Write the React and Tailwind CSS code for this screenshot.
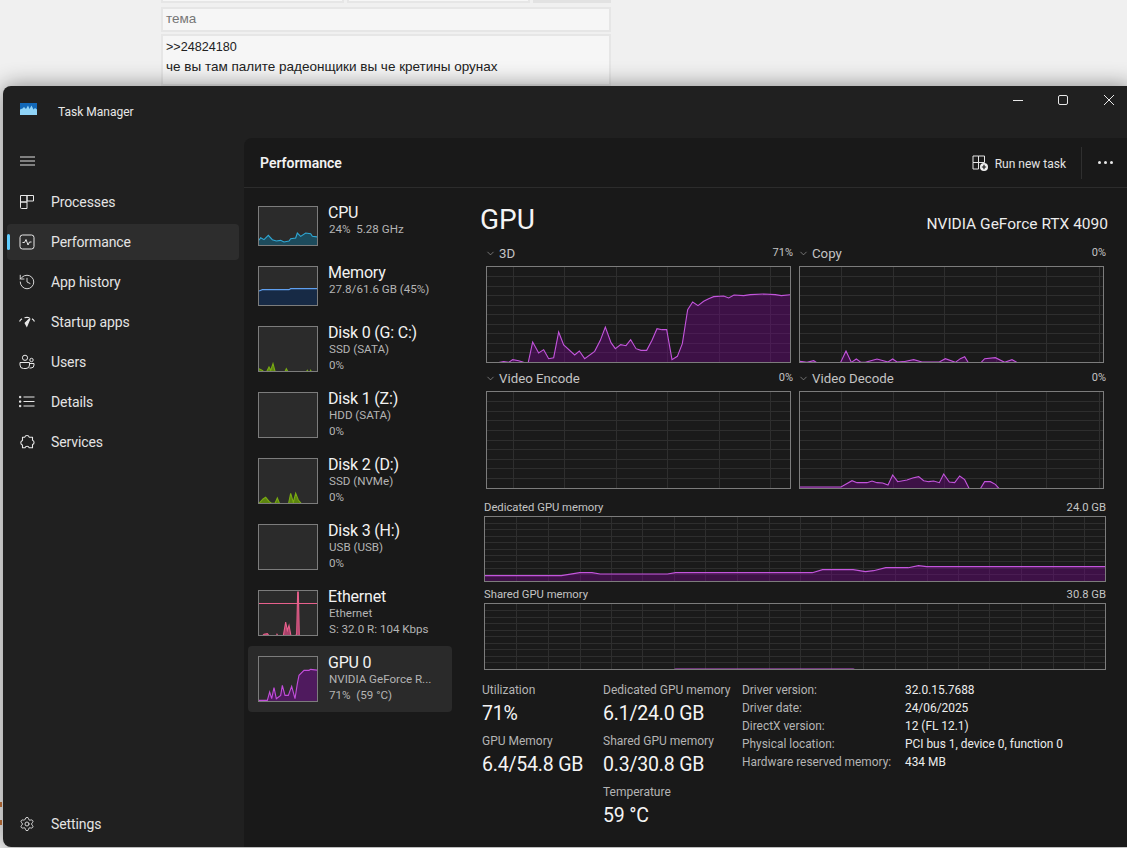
import { History, Settings, ChevronDown } from 'lucide-react';

// Points are read off the screenshot, ox/oy = corner of the plot, sx/sy = crop scale
const scale = (pts, ox, oy, sx = 3, sy = 3) => pts.map(([x, y]) => [(x - ox) / sx, (y - oy) / sy]);
const toStr = (pts) => pts.map((p) => p.join(',')).join(' ');

const Chart = ({ w, h, className = '', hLines = 10, vLines = [], series = [], line = '#c355dc', fill = '#730589', fillOpacity = 0.4, gridColor = '#2e2e2e', bg = 'bg-[#1a1a1a]' }) => (
  <div className={`border border-[#7c7c7c] ${bg} ${className}`}>
    <svg viewBox={`0 0 ${w} ${h}`} preserveAspectRatio="none" className="block h-full w-full overflow-hidden">
      {hLines > 0 && Array.from({ length: hLines - 1 }, (_, i) => (
        <line key={i} x1="0" x2={w} y1={((i + 1) * h) / hLines} y2={((i + 1) * h) / hLines} stroke={gridColor} strokeWidth="1" shapeRendering="crispEdges" />
      ))}
      {vLines.map((x) => (
        <line key={x} x1={x} x2={x} y1="0" y2={h} stroke={gridColor} strokeWidth="1" shapeRendering="crispEdges" />
      ))}
      {series.map((pts, i) => (
        <g key={i}>
          <polygon points={`${pts[0][0]},${h + 3} ${toStr(pts)} ${pts[pts.length - 1][0]},${h + 3}`} fill={fill} fillOpacity={fillOpacity} />
          <polyline points={toStr(pts)} fill="none" stroke={line} strokeWidth="1.1" />
        </g>
      ))}
    </svg>
  </div>
);

const d3 = scale([[35,372],[62,368],[85,364],[100,366],[112,358],[130,361],[145,366],[158,370],[172,305],[190,338],[205,328],[220,355],[235,352],[250,275],[265,314],[298,344],[312,332],[328,355],[358,333],[375,300],[390,260],[407,307],[420,325],[436,313],[452,316],[466,298],[482,325],[497,330],[514,330],[530,300],[545,265],[560,268],[574,268],[590,358],[606,348],[621,310],[637,208],[652,185],[668,196],[685,183],[700,175],[715,169],[745,167],[760,173],[776,164],[805,166],[825,163],[865,161],[900,163],[918,166],[947,163]], 35, 80);
const copy = scale([[14,363],[35,366],[55,361],[72,372],[130,372],[135,368],[152,332],[168,366],[183,356],[197,366],[210,366],[245,356],[278,365],[292,356],[305,365],[325,364],[355,358],[380,365],[432,365],[450,355],[480,366],[495,355],[508,349],[522,372],[552,372],[568,355],[600,352],[628,366],[650,358],[675,372],[925,372]], 14, 80);
const decode = scale([[14,350],[137,350],[170,331],[185,337],[215,337],[230,332],[245,337],[262,338],[278,344],[292,314],[307,334],[335,329],[352,323],[370,319],[385,331],[400,334],[415,332],[432,337],[445,311],[462,335],[478,337],[493,317],[508,328],[524,360],[552,360],[568,334],[585,334],[600,342],[616,360],[925,360]], 14, 65);
const dedicated = scale([[23,232],[210,232],[255,223],[285,223],[305,227],[470,227],[490,223],[825,223],[850,214],[925,214],[955,220],[975,217],[1005,208],[1060,208],[1085,202],[1105,205],[1545,205]], 23, 56, 2.45);
const shared = scale([[23,520],[465,520],[490,511],[925,511],[948,520],[1545,520]], 23, 316, 2.45);

const vLeft = [26, 77, 129, 180, 232, 283];
const vRight = [41, 93, 144, 196, 246, 299];
const vMem = [101,178,256,332,410,487,564,642,719,797,873,951,1028,1106,1184,1260,1338,1415,1492].map((x) => (x - 23) / 2.45);

const devices = [
  { name: 'CPU', lines: ['24%  5.28 GHz'], h: 38, color: '#2fa8d5', fill: '#1d4b5c', pts: scale([[40,150],[45,142],[55,148],[68,135],[80,148],[92,152],[105,150],[115,155],[130,152],[135,145],[150,143],[155,128],[165,138],[180,128],[195,130],[200,138],[218,140]], 40, 50) },
  { name: 'Memory', lines: ['27.8/61.6 GB (45%)'], h: 38, color: '#5f9fee', fill: '#172a45', pts: scale([[40,302],[50,298],[130,298],[135,295],[218,295]], 40, 230) },
  { name: 'Disk 0 (G: C:)', lines: ['SSD (SATA)', '0%'], h: 44, color: '#79ab12', fill: '#5c8410', pts: scale([[40,535],[50,540],[60,550],[70,530],[75,540],[82,520],[90,550],[115,550],[122,535],[130,550],[178,550],[185,540],[190,550],[195,540],[200,550]], 40, 410) },
  { name: 'Disk 1 (Z:)', lines: ['HDD (SATA)', '0%'], h: 44, color: '#79ab12', fill: '#5c8410', pts: null },
  { name: 'Disk 2 (D:)', lines: ['SSD (NVMe)', '0%'], h: 44, color: '#79ab12', fill: '#5c8410', pts: scale([[40,158],[52,145],[60,140],[70,152],[78,158],[88,158],[95,142],[103,162],[128,162],[135,128],[143,155],[150,128],[158,148],[172,165]], 40, 25) },
  { name: 'Disk 3 (H:)', lines: ['USB (USB)', '0%'], h: 44, color: '#79ab12', fill: '#5c8410', pts: null },
  { name: 'Ethernet', lines: ['Ethernet', 'S: 32.0 R: 104 Kbps'], h: 44, color: '#e8608c', fill: '#a8426a', pts: scale([[45,562],[55,552],[65,550],[75,562],[90,562],[94,552],[100,562],[112,562],[120,515],[125,540],[130,525],[137,562],[148,562],[153,550],[156,425],[158,425],[161,562]], 40, 422), extra: 'line' },
  { name: 'GPU 0', lines: ['NVIDIA GeForce R...', '71%  (59 °C)'], h: 44, color: '#c24ddb', fill: '#4f1a5e', selected: true, pts: scale([[40,750],[65,750],[72,725],[78,745],[85,712],[92,745],[105,735],[110,705],[118,735],[128,735],[138,708],[148,745],[155,700],[160,675],[175,660],[190,660],[195,657],[218,660]], 40, 620) },
];

const iconClass = 'h-4 w-4 text-[#e8e8e8]';

const ProcessesIcon = () => (
  <svg viewBox="0 0 16 16" fill="none" stroke="currentColor" strokeWidth="1" className={iconClass}>
    <path d="M1.500 1.500h6.500v6.500h-6.500zM8 1.500h6.500v5.500h-6.500zM1.500 8h6.500v6.500h-5.500a1 1 0 0 1-1-1z" />
  </svg>
);
const PerformanceIcon = () => (
  <svg viewBox="0 0 16 16" fill="none" stroke="currentColor" strokeWidth="1" className={iconClass}>
    <rect x="1" y="1" width="14" height="14" rx="2.500" />
    <path d="M3.500 8.500h2l1.500-3 2 5.500 1.500-3h2" />
  </svg>
);
const StartupIcon = () => (
  <svg viewBox="0 0 16 16" fill="none" stroke="currentColor" strokeWidth="1.200" className={iconClass}>
    <path d="M0.500 7.500a8 8 0 0 1 2.500-2.700M5.500 3.700a8 8 0 0 1 5 0M13 4.800a8 8 0 0 1 2.500 2.700" />
    <path d="M11 4.500 7.800 12l-1.600-3z" fill="currentColor" />
  </svg>
);
const UsersIcon = () => (
  <svg viewBox="0 0 16 16" fill="none" stroke="currentColor" strokeWidth="1" className={iconClass}>
    <circle cx="6" cy="3.800" r="2.600" />
    <circle cx="12.500" cy="6" r="1.700" />
    <path d="M1 8.500h9.500v2.500a3.500 3.500 0 0 1-3.500 3.500h-2.500a3.500 3.500 0 0 1-3.500-3.500zM11 9.500h4v1.500a3 3 0 0 1-3 3h-1.500" />
  </svg>
);
const DetailsIcon = () => (
  <svg viewBox="0 0 16 16" fill="none" stroke="currentColor" strokeWidth="1" className={iconClass}>
    <path d="M4.500 3h11M4.500 7.500h11M4.500 12h11" />
    <path d="M0.500 2.400h1.300v1.300h-1.300zM0.500 6.900h1.300v1.300h-1.300zM0.500 11.400h1.300v1.300h-1.300z" fill="currentColor" />
  </svg>
);
const ServicesIcon = () => (
  <svg viewBox="0 0 16 16" fill="none" stroke="currentColor" strokeWidth="1.100" strokeLinejoin="round" className={iconClass}>
    <path d="M3.500 3.200h2.300a2.300 2.300 0 0 1 4.400 0h3.300v3.100a2.200 2.200 0 0 1 0 4.200v3.300h-3.300a2.200 2.200 0 0 0-4.200 0h-2.500v-2.700a2.400 2.400 0 0 1 0-4.600z" />
  </svg>
);

const navItems = [
  { label: 'Processes', icon: <ProcessesIcon /> },
  { label: 'Performance', icon: <PerformanceIcon />, active: true },
  { label: 'App history', icon: <History className="h-[18px] w-[18px] -mx-px text-[#e8e8e8]" strokeWidth={1.2} /> },
  { label: 'Startup apps', icon: <StartupIcon /> },
  { label: 'Users', icon: <UsersIcon /> },
  { label: 'Details', icon: <DetailsIcon /> },
  { label: 'Services', icon: <ServicesIcon /> },
];

const NavItem = ({ label, icon, active }) => (
  <div className={`relative my-0.5 ml-1 mr-[5px] flex h-9 items-center gap-[15px] rounded pl-[12px] text-[14px] tracking-[-0.1px] text-[#e4e4e4] ${active ? 'bg-[#2d2d2d]' : ''}`}>
    {active && <span className="absolute left-0 top-[10px] h-4 w-[3px] rounded bg-[#60cdff]" />}
    {icon}
    <span className="ml-px">{label}</span>
  </div>
);

const DeviceRow = ({ name, lines, h, color, fill, pts, selected, extra }) => (
  <div className={`flex gap-[10px] rounded-sm pl-[10px] ${h === 38 ? 'h-[60px]' : 'h-[66px]'} ${selected ? 'bg-[#2a2a2a]' : ''}`}>
    <div className="relative mt-[10px]">
      <Chart
        w={58}
        h={h}
        hLines={0}
        className={h === 38 ? 'h-10 w-[60px]' : 'h-[46px] w-[60px]'}
        bg="bg-[#2b2b2b]"
        series={pts ? [pts] : []}
        line={color}
        fill={fill}
        fillOpacity={1}
      />
      {extra === 'line' && <span className="absolute left-px right-px top-[13px] h-px bg-[#e8608c]" />}
    </div>
    <div className="pt-2">
      <div className="text-[16px] leading-[18px] tracking-[-0.2px] text-[#f2f2f2]">{name}</div>
      {lines.map((l) => (
        <div key={l} className="whitespace-pre pl-px text-[11.6px] leading-[15.5px] text-[#b4b4b4]">{l}</div>
      ))}
    </div>
  </div>
);

const EngineChart = ({ label, value, series, vLines, tall }) => (
  <div>
    <div className="flex h-[25px] items-center justify-between pl-px text-[#c4c4c4]">
      <div className="flex items-center gap-[3px] text-[13.25px]">
        <ChevronDown className="h-[11px] w-[11px] text-[#9a9a9a]" strokeWidth={1.5} />
        <span>{label}</span>
      </div>
      <span className="text-[11px]">{value}</span>
    </div>
    <Chart w={303} h={tall ? 96 : 95} vLines={vLines} series={series} className={`mx-[2px] w-[305px] ${tall ? 'h-[98px]' : 'h-[97px]'}`} />
  </div>
);

const MemoryChart = ({ label, value, series, height }) => (
  <div>
    <div className="flex h-[18px] items-center justify-between pt-0.5 text-[11.25px] text-[#c4c4c4]">
      <span>{label}</span>
      <span>{value}</span>
    </div>
    <Chart w={620} h={height - 2} vLines={vMem} series={series} className={`w-[622px] ${height === 66 ? 'h-[66px]' : 'h-[67px]'}`} />
  </div>
);

const Stat = ({ label, value }) => (
  <div>
    <div className="text-[12px] leading-4 text-[#b4b4b4]">{label}</div>
    <div className="mt-0.5 text-[19.5px] leading-[27px] tracking-[-0.2px] text-[#f4f4f4]">{value}</div>
  </div>
);

const driverInfo = [
  ['Driver version:', '32.0.15.7688'],
  ['Driver date:', '24/06/2025'],
  ['DirectX version:', '12 (FL 12.1)'],
  ['Physical location:', 'PCI bus 1, device 0, function 0'],
  ['Hardware reserved memory:', '434 MB'],
];

const App = () => (
  <div className="relative h-[848px] w-[1127px] overflow-hidden bg-[#f0f0f0] font-[Roboto,sans-serif]">
    <span className="absolute left-0 top-[802px] h-[5px] w-[2px] bg-[#c9763c]" />
    <span className="absolute left-0 top-[820px] h-[5px] w-[2px] bg-[#c9763c]" />

    <div className="ml-[161px] flex h-[86px] w-[450px] flex-col overflow-hidden font-['Liberation_Sans',sans-serif] text-[13.5px]">
      <div className="flex h-[3px] gap-[3px]">
        <div className="w-[183px] border-2 border-t-0 border-[#e6e6e6] bg-[#f6f6f6]" />
        <div className="w-[183px] border-2 border-t-0 border-[#e6e6e6] bg-[#f6f6f6]" />
        <div className="w-[78px] bg-[#e2e2e2]" />
      </div>
      <div className="mt-1 flex h-[25px] items-center border-2 border-[#e6e6e6] bg-[#f6f6f6] px-[3px] text-[#777777]">тема</div>
      <div className="mt-[2px] flex-1 border-2 border-[#e6e6e6] bg-[#f6f6f6] px-[3px] pt-[2px] leading-[19px] text-[#222222]">
        <div className="text-[12.6px]">&gt;&gt;24824180</div>
        <div>че вы там палите радеонщики вы че кретины орунах</div>
      </div>
    </div>

    <div className="relative ml-[3px] flex h-[761px] w-[1129px] flex-col rounded-l-lg bg-[#202020] shadow-[0_0_22px_rgba(0,0,0,0.45)]">
      <div className="flex h-[52px] shrink-0">
        <div className="flex items-center pl-[17px]">
          <svg viewBox="0 0 17 12" className="mb-[6px] h-3 w-[17px]">
            <rect width="17" height="12" fill="#8fd3f7" />
            <path d="M0 0h17v6.500l-2-1.500-1.500 1.500-2-4-2 3.500-1.500-3.500-2 3.500-2-2-1.500 1.500-2.500 1z" fill="#1268b8" />
          </svg>
          <span className="ml-[21px] text-[12px] text-[#e8e8e8]">Task Manager</span>
        </div>
        <div className="ml-auto flex h-7 text-[#e8e8e8]">
          <div className="flex w-[46px] items-center justify-center">
            <span className="h-px w-[10px] bg-[#e8e8e8]" />
          </div>
          <div className="flex w-[45px] items-center justify-center">
            <span className="mr-px h-[10px] w-[10px] rounded-[2px] border border-[#e8e8e8]" />
          </div>
          <div className="flex w-[46px] items-center justify-center">
            <svg viewBox="0 0 10 10" className="h-[10px] w-[10px]" fill="none" stroke="currentColor" strokeWidth="1">
              <path d="M0 0l10 10M10 0L0 10" />
            </svg>
          </div>
        </div>
      </div>

      <div className="flex min-h-0 flex-1">
        <aside className="flex w-[241px] shrink-0 flex-col pb-[3px]">
          <div className="flex h-[44px] shrink-0 items-center pl-[17px] pt-[2px]">
            <svg viewBox="0 0 15 10" className="h-[10px] w-[15px]" fill="none" stroke="#e0e0e0" strokeWidth="1">
              <path d="M0 1h15M0 5h15M0 9h15" />
            </svg>
          </div>
          {navItems.map((item) => (
            <NavItem key={item.label} {...item} />
          ))}
          <div className="mt-auto">
            <NavItem label="Settings" icon={<Settings className={iconClass} strokeWidth={1.3} />} />
          </div>
        </aside>

        <main className="flex min-w-0 flex-1 flex-col rounded-tl-lg bg-[#191919]">
          <header className="flex h-[50px] shrink-0 items-center border-b border-[#2c2c2c] pl-4">
            <h1 className="pt-0.5 text-[14px] font-semibold text-[#f2f2f2]">Performance</h1>
            <div className="ml-auto flex items-center text-[#e4e4e4]">
              <svg viewBox="0 0 16 16" className="h-4 w-4" fill="none" stroke="currentColor" strokeWidth="1">
                <path d="M1 1h5.500v6.500h-5.500zM6.500 1h6v6.500h-6zM1 7.500h5.500v6.500h-5.500z" />
                <circle cx="12" cy="12" r="4" fill="#f0f0f0" stroke="none" />
                <path d="M12 9.800v4.400M9.800 12h4.400" stroke="#191919" strokeWidth="1.200" />
              </svg>
              <span className="ml-[7px] pt-0.5 text-[12px]">Run new task</span>
              <span className="ml-[15px] h-8 w-px bg-[#2f2f2f]" />
              <div className="ml-[16px] mr-[19px] flex gap-[3px]">
                <span className="h-[3px] w-[3px] rounded-full bg-[#e8e8e8]" />
                <span className="h-[3px] w-[3px] rounded-full bg-[#e8e8e8]" />
                <span className="h-[3px] w-[3px] rounded-full bg-[#e8e8e8]" />
              </div>
            </div>
          </header>

          <div className="flex min-h-0 flex-1">
            <div className="ml-1 w-[204px] shrink-0 pt-2">
              {devices.map((d) => (
                <DeviceRow key={d.name} {...d} />
              ))}
            </div>

            <div className="min-w-0 flex-1 pl-7 pr-6 pt-[14px]">
              <div className="flex h-9 items-center justify-between">
                <h2 className="text-[28px] text-[#f4f4f4]">GPU</h2>
                <span className="pt-2.5 text-[15.5px] text-[#ececec]">NVIDIA GeForce RTX 4090</span>
              </div>

              <div className="ml-1 mr-[2px] mt-[3px] grid w-[622px] grid-cols-2 gap-x-1 gap-y-[3px]">
                <EngineChart label="3D" value="71%" series={[d3]} vLines={vLeft} />
                <EngineChart label="Copy" value="0%" series={[copy]} vLines={vRight} />
                <EngineChart label="Video Encode" value="0%" series={[]} vLines={vLeft} tall />
                <EngineChart label="Video Decode" value="0%" series={[decode]} vLines={vRight} tall />
              </div>

              <div className="ml-1 mt-[9px] flex w-[622px] flex-col gap-[3px]">
                <MemoryChart label="Dedicated GPU memory" value="24.0 GB" series={[dedicated]} height={66} />
                <MemoryChart label="Shared GPU memory" value="30.8 GB" series={[shared]} height={67} />
              </div>

              <div className="ml-[2px] mt-3 flex">
                <div className="flex w-[121px] flex-col gap-[6px]">
                  <Stat label="Utilization" value="71%" />
                  <Stat label="GPU Memory" value="6.4/54.8 GB" />
                </div>
                <div className="flex w-[139px] flex-col gap-[6px]">
                  <Stat label="Dedicated GPU memory" value="6.1/24.0 GB" />
                  <Stat label="Shared GPU memory" value="0.3/30.8 GB" />
                  <Stat label="Temperature" value="59 °C" />
                </div>
                <div className="-mt-px grid grid-cols-[163px_auto] content-start text-[11.9px] leading-[18px]">
                  {driverInfo.map(([k, v]) => (
                    <div key={k} className="contents">
                      <span className="text-[#b4b4b4]">{k}</span>
                      <span className="text-[#ececec]">{v}</span>
                    </div>
                  ))}
                </div>
              </div>
            </div>
          </div>
        </main>
      </div>
    </div>
  </div>
);

export default App;
